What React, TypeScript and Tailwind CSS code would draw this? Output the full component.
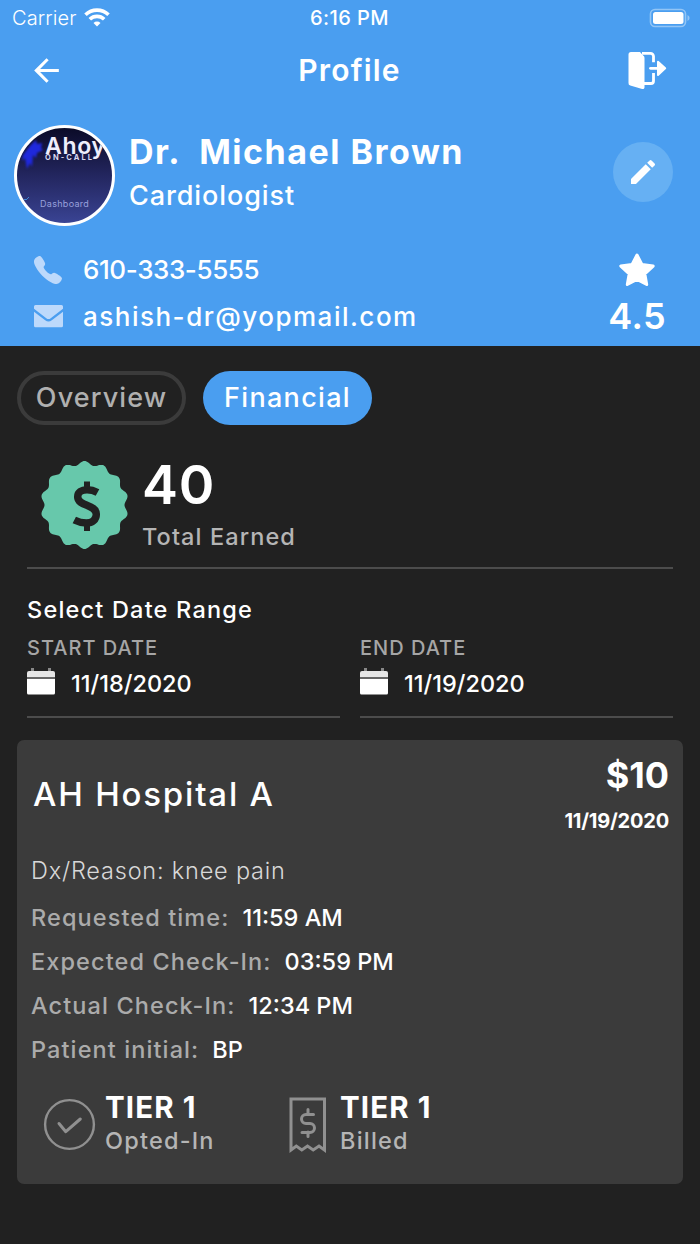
import { IoCall } from "react-icons/io5";
import { MdArrowBack, MdEdit } from "react-icons/md";

const visit = {
  hospital: "AH Hospital A",
  amount: "$10",
  date: "11/19/2020",
  reason: "Dx/Reason: knee pain",
};

export default function App() {
  return (
    <div className="w-[700px] h-[1244px] overflow-hidden bg-[#212121] text-white font-['Inter',sans-serif] whitespace-nowrap">
      <header className="h-[346px] bg-[#4a9ef0]">
        <StatusBar />

        <div className="h-[71px] grid grid-cols-3 items-center pl-[28px] pr-[33px]">
          <MdArrowBack size={37} />
          <h1 className="justify-self-center text-[30px] font-semibold tracking-[1.2px] ml-[4px]">Profile</h1>
          <LogoutIcon />
        </div>

        <div className="flex items-start pl-[14px] pr-[27px] pt-[19px]">
          <Avatar />
          <div className="ml-[14px] mt-[5px] flex-1">
            <h2 className="text-[34px] leading-[43px] font-bold tracking-[1.5px] whitespace-pre">Dr.  Michael Brown</h2>
            <p className="text-[27px] leading-[45px] font-medium tracking-[0.9px]">Cardiologist</p>
          </div>
          <button className="mt-[17px] size-[60px] rounded-full bg-[#66b0f3] flex items-center justify-center">
            <MdEdit size={32} />
          </button>
        </div>

        <div className="flex justify-between pl-[34px] pr-[34px] pt-[20px]">
          <div className="text-[26px] font-medium">
            <div className="h-[47px] flex items-center">
              <IoCall size={32} className="text-[#bdd9fb] -ml-[2px] mr-[19px]" />
              <span className="tracking-[-0.4px]">610-333-5555</span>
            </div>
            <div className="h-[46px] flex items-center">
              <MailIcon />
              <span className="tracking-[1.5px]">ashish-dr@yopmail.com</span>
            </div>
          </div>
          <div className="flex flex-col items-center pt-[6px]">
            <svg className="mr-[1px]" width="38" height="35" viewBox="0 0 38 35" fill="white" stroke="white" strokeWidth="3" strokeLinejoin="round">
              <path d="M19 3l4.900 9.500 11.300 1.600-8.400 7.700 1.900 10.700L19 27.400l-9.700 5.100 1.900-10.700-8.400-7.700 11.300-1.600z" />
            </svg>
            <span className="text-[36px] leading-[58px] font-semibold tracking-[0.4px]">4.5</span>
          </div>
        </div>
      </header>

      <main className="px-[17px] pt-[25px]">
        <div className="flex gap-[17px] text-[27px] font-medium">
          <button className="w-[169px] h-[54px] rounded-full border-4 border-[#3b3b3b] text-[#b0b0b0] tracking-[1.1px]">Overview</button>
          <button className="w-[169px] h-[54px] rounded-full bg-[#4a9ef0] tracking-[1.3px]">Financial</button>
        </div>

        <section className="mx-[10px] h-[144px] border-b-2 border-[#4c4c4c] flex pt-[35px] pl-[13px]">
          <EarnedBadge />
          <div className="ml-[14px]">
            <p className="text-[54px] leading-[50px] font-semibold tracking-[0.8px]">40</p>
            <p className="text-[23.5px] leading-[54px] font-medium text-[#b5b5b5] tracking-[1.1px]">Total Earned</p>
          </div>
        </section>

        <section className="mx-[10px] pt-[24px]">
          <h3 className="text-[23.5px] leading-[34px] font-medium tracking-[1.2px]">Select Date Range</h3>
          <div className="flex justify-between">
            <DateField label="START DATE" value="11/18/2020" />
            <DateField label="END DATE" value="11/19/2020" />
          </div>
        </section>

        <section className="mt-[22px] h-[444px] rounded-[7px] bg-[#3b3b3b] px-[14px]">
          <div className="flex justify-between h-[110px]">
            <h3 className="ml-[2px] text-[33px] leading-[109px] font-medium tracking-[1.8px]">{visit.hospital}</h3>
            <div className="text-right font-bold pt-[10px]">
              <p className="text-[36px] leading-[50px]">{visit.amount}</p>
              <p className="text-[20px] leading-[42px] tracking-[-0.2px]">{visit.date}</p>
            </div>
          </div>
          <p className="text-[23.5px] leading-[42px] font-light text-[#d8d8d8] tracking-[0.8px]">{visit.reason}</p>
          <div className="pt-[4px]">
            <InfoRow label="Requested time:" value="11:59 AM" />
            <InfoRow label="Expected Check-In:" value="03:59 PM" />
            <InfoRow label="Actual Check-In:" value="12:34 PM" />
            <InfoRow label="Patient initial:" value="BP" />
          </div>
          <div className="flex pl-[12px] pt-[18px]">
            <div className="flex w-[246px]">
              <svg className="mt-[8px]" width="53" height="53" viewBox="0 0 53 53" fill="none" stroke="#909090" strokeWidth="2.4">
                <circle cx="26.5" cy="26.5" r="24.4" />
                <path d="M16 25.500l6.800 8.200 14.500-12.700" strokeWidth="3" strokeLinecap="round" strokeLinejoin="round" />
              </svg>
              <TierText status="Opted-In" className="ml-[9px]" />
            </div>
            <svg className="mt-[7px]" width="38" height="57" viewBox="0 0 38 57" fill="none" stroke="#909090" strokeWidth="3">
              <path d="M2 2h33.500v51l-5.500-4-5.800 4-5.700-4-5.700 4-5.500-4L2 53z" />
              <path d="M24.500 17.500h-7.500a4.300 4.300 0 0 0 0 9h4a4.300 4.300 0 0 1 0 9H13M19 12.500v5M19 35v4.500" strokeLinecap="round" />
            </svg>
            <TierText status="Billed" className="ml-[13px]" />
          </div>
        </section>
      </main>
    </div>
  );
}

function StatusBar() {
  return (
    <div className="h-[35px] grid grid-cols-3 items-center pl-[12px] pr-[9px]">
      <div className="flex items-center gap-[8px]">
        <span className="text-[20px] font-light tracking-[0.1px]">Carrier</span>
        <svg width="26" height="19" viewBox="0 0 26 19" fill="none" stroke="white" strokeWidth="3.600">
          <path d="M1.500 6.800a16.500 16.500 0 0 1 23 0" />
          <path d="M5.800 11.300a10.300 10.300 0 0 1 14.400 0" />
          <path d="M13 18.500l-3.500-3.500a5 5 0 0 1 7 0z" fill="white" stroke="none" />
        </svg>
      </div>
      <span className="justify-self-center text-[20px] font-medium tracking-[0.4px] -ml-[4px]">6:16 PM</span>
      <svg className="justify-self-end" width="42" height="20" viewBox="0 0 42 20">
        <rect x="1.500" y="1.500" width="35" height="17" rx="4.500" fill="none" stroke="#92c5f6" strokeWidth="1.600" />
        <rect x="4" y="4" width="30.500" height="12" rx="2.500" fill="white" />
        <path d="M38.500 7a3.200 3.200 0 0 1 0 6z" fill="#92c5f6" />
      </svg>
    </div>
  );
}

function LogoutIcon() {
  return (
    <svg className="justify-self-end" width="39" height="39" viewBox="0 0 39 39">
      <path d="M14 2.300h8.500a3 3 0 0 1 3 3v6M25.500 22v8a2.500 2.500 0 0 1-2.500 2.500H16" fill="none" stroke="white" strokeWidth="2.800" />
      <path d="M3 1h9l3.200 3.400a3 3 0 0 1 1.300 2.600v29.200c0 1.400-1 2.100-2.400 1.700L2.300 34.600A2.500 2.500 0 0 1 .500 32V3.500A2.500 2.500 0 0 1 3 1z" fill="white" />
      <path d="M22.500 17.300h8" stroke="white" strokeWidth="2.800" strokeLinecap="round" />
      <path d="M30 10.800l7.200 6.500-7.200 6.700z" fill="white" stroke="white" strokeWidth="2" strokeLinejoin="round" />
    </svg>
  );
}

function MailIcon() {
  return (
    <svg className="mr-[20px]" width="29" height="23" viewBox="0 0 29 23" fill="#bdd9fb">
      <path d="M1.500 0h26A1.500 1.500 0 0 1 29 1.500v2.300l-12.300 9.400a3.600 3.600 0 0 1-4.400 0L0 3.800V1.500A1.500 1.500 0 0 1 1.500 0z" />
      <path d="M0 6.800l11.200 8.500a5.400 5.400 0 0 0 6.600 0L29 6.800v13.900a1.500 1.500 0 0 1-1.500 1.500h-26A1.500 1.500 0 0 1 0 20.700z" />
    </svg>
  );
}

function Avatar() {
  return (
    <div className="relative size-[101px] rounded-full border-3 border-white overflow-hidden bg-linear-to-b from-[#0b0b28] via-[#23265f] to-[#3a4494]">
      <svg className="absolute left-[4px] top-[11px] blur-[0.8px]" width="24" height="30" viewBox="0 0 24 30" fill="#1f28dc">
        <path d="M2 16C7 9 11 4 15 1l1 4 5-1-1 5 2 2-6 3-1 5-3-3-1 12-2-4-3 6-2-11-3 3z" />
      </svg>
      <span className="absolute left-[28px] top-[9px] text-[23px] leading-[18px] font-semibold tracking-[0.7px] text-[#eeeefc]">Ahoy</span>
      <span className="absolute left-[28px] top-[26px] text-[7.500px] leading-[8px] font-bold tracking-[2.100px] text-[#d8d8f0]">ON-CALL</span>
      <span className="absolute left-[23px] top-[70px] text-[9px] leading-[11px] tracking-[0.300px] text-[#98a0dc]">Dashboard</span>
      <svg className="absolute left-[4px] top-[68px]" width="9" height="8" viewBox="0 0 9 8" fill="none" stroke="#3e86d4">
        <path d="M1 6l3-3 1 1 3-3" />
      </svg>
    </div>
  );
}

// scalloped seal: 14 bumps round the rim
function EarnedBadge() {
  const points = Array.from({ length: 281 }, (_, i) => {
    const a = (i / 280) * Math.PI * 2;
    const r = 42 + 2 * Math.cos(14 * a);
    return `${(44.5 + r * Math.sin(a)).toFixed(2)},${(45 - r * Math.cos(a)).toFixed(2)}`;
  });
  return (
    <svg className="mr-[-1px]" width="89" height="90" viewBox="0 0 89 90">
      <polygon points={points.join(" ")} fill="#67c8ab" />
      <g fill="none" stroke="#212121">
        <path d="M57.500 32.500C54 30.600 50.500 29.800 47 29.800c-5.500 0-9.300 2.500-9.300 7 0 10 18.600 7 18.600 17.500 0 5.500-4 8.700-10 8.700-4.500 0-8-1-12-3" strokeWidth="7.500" />
        <path d="M47 21.500v7M47 63v8" strokeWidth="6" />
      </g>
    </svg>
  );
}

function DateField({ label, value }: { label: string; value: string }) {
  return (
    <div className="w-[313px] h-[91px] border-b-2 border-[#4c4c4c]">
      <p className="text-[20px] leading-[43px] font-medium text-[#a6a6a6] tracking-[1px]">{label}</p>
      <div className="flex h-[27px] items-center">
        <svg className="-mt-[6px] mr-[16px]" width="28" height="28" viewBox="0 0 28 28" fill="white">
          <path d="M4 1h3v4H4zM21 1h3v4h-3z" fill="#888" />
          <path d="M2 4h24a2 2 0 0 1 2 2v4H0V6a2 2 0 0 1 2-2z" fill="#e6e6e6" />
          <path d="M0 10h28v2H0z" fill="#666" />
          <path d="M0 12h28v14a1.500 1.500 0 0 1-1.500 1.500h-25A1.500 1.500 0 0 1 0 26z" />
        </svg>
        <span className="text-[23.500px] font-medium">{value}</span>
      </div>
    </div>
  );
}

function InfoRow({ label, value }: { label: string; value: string }) {
  return (
    <p className="flex gap-[13px] text-[23.500px] leading-[44px]">
      <span className="font-medium text-[#ababab] tracking-[1.1px]">{label}</span>
      <span className="font-medium">{value}</span>
    </p>
  );
}

function TierText({ status, className }: { status: string; className: string }) {
  return (
    <div className={className}>
      <p className="text-[29.500px] leading-[34px] font-bold tracking-[1.1px]">TIER 1</p>
      <p className="text-[23.500px] leading-[34px] font-medium text-[#b5b5b5] tracking-[1.200px]">{status}</p>
    </div>
  );
}
